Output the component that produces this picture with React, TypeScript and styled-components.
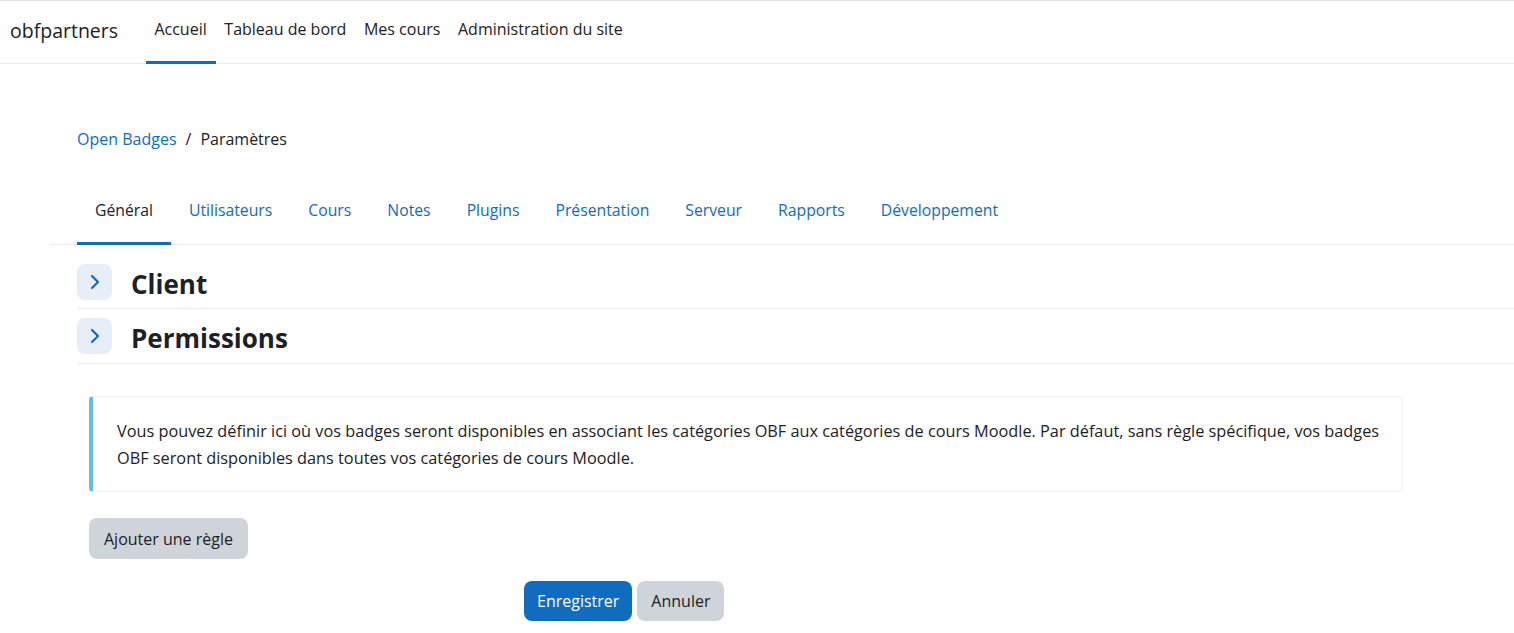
import { FC } from "react";
import styled, { createGlobalStyle } from "styled-components";

const GlobalStyle = createGlobalStyle`
  body {
    margin: 0;
    background: #fff;
    font-family: "Open Sans", "Noto Sans", sans-serif;
    color: #1d2125;
  }
  * { box-sizing: border-box; }
`;

const NavBar = styled.nav`
  display: flex;
  align-items: stretch;
  height: 64px;
  border-top: 1px solid #dee2e6;
  border-bottom: 1px solid #e9ecef;
  padding-left: 10px;
`;

const Brand = styled.div`
  display: flex;
  align-items: center;
  font-size: 19.5px;
  margin-right: 27.5px;
  padding-bottom: 4px;
`;

const NavItem = styled.a<{ active?: boolean }>`
  display: flex;
  align-items: center;
  padding: 0 8.8px 4px;
  font-size: 16px;
  color: #1d2125;
  border-bottom: 3px solid ${(p) => (p.active ? "#0f6cbf" : "transparent")};
  margin-bottom: -1px;
  text-decoration: none;
`;

const Page = styled.main`
  padding: 63px 0 0 77px;
`;

const Breadcrumb = styled.div`
  display: flex;
  align-items: center;
  gap: 9px;
  font-size: 16px;
  line-height: 24px;
  color: #1d2125;
`;

const Crumb = styled.a`
  color: #0f6cbf;
  text-decoration: none;
`;

const Tabs = styled.div`
  display: flex;
  margin: 25px 0 0 -27px;
  padding-left: 27px;
  border-bottom: 1px solid #e9ecef;
`;

const Tab = styled.a<{ active?: boolean }>`
  padding: 22px 18px 20px;
  line-height: 24px;
  font-size: 15.75px;
  color: ${(p) => (p.active ? "#1d2125" : "#0f6cbf")};
  border-bottom: 3px solid ${(p) => (p.active ? "#0f6cbf" : "transparent")};
  margin-bottom: -1px;
  text-decoration: none;
`;

const Section = styled.div<{ first?: boolean }>`
  display: flex;
  align-items: center;
  gap: 19px;
  padding: ${(p) => (p.first ? "19px 0 8px" : "9px 0 9px")};
  border-bottom: 1px solid #e9ecef;
`;

const Toggle = styled.span`
  display: flex;
  align-items: center;
  justify-content: center;
  width: 35px;
  height: 36px;
  border-radius: 8px;
  background: #e7eef8;
  color: #0f6cbf;
`;

const SectionTitle = styled.h3`
  margin: 4px 0 0;
  font-size: 26px;
  font-weight: 700;
  line-height: 32px;
`;

const Body = styled.div`
  padding: 32px 111px 0 12px;
`;

const InfoBox = styled.div`
  border: 1px solid #f0f0f0;
  border-left: 4px solid #5bc0de;
  border-radius: 4px;
  padding: 21px 14px 19px 24px;
  font-size: 16.3px;
  line-height: 27px;
`;

const Button = styled.button<{ primary?: boolean }>`
  font-family: inherit;
  font-size: 16px;
  border: none;
  border-radius: 8px;
  padding: 0 ${(p) => (p.primary ? "13px" : "14px")};
  background: ${(p) => (p.primary ? "#0f6cbf" : "#ced4da")};
  color: ${(p) => (p.primary ? "#fff" : "#1d2125")};
  height: 40px;
`;

const AddButton = styled(Button)`
  margin-top: 26px;
  height: 41px;
  padding: 0 15px;
`;

const Actions = styled.div`
  display: flex;
  gap: 5px;
  margin: 22px 0 0 435px;
`;

const Chevron: FC = () => (
  <svg width="12" height="16" viewBox="0 0 12 16" fill="none">
    <path d="M3 2l6 6-6 6" stroke="currentColor" strokeWidth="2.2" strokeLinecap="round" strokeLinejoin="round" />
  </svg>
);

const tabs = [
  "Général",
  "Utilisateurs",
  "Cours",
  "Notes",
  "Plugins",
  "Présentation",
  "Serveur",
  "Rapports",
  "Développement",
];

const App: FC = () => (
  <>
    <GlobalStyle />
    <NavBar>
      <Brand>obfpartners</Brand>
      <NavItem active>Accueil</NavItem>
      <NavItem>Tableau de bord</NavItem>
      <NavItem>Mes cours</NavItem>
      <NavItem>Administration du site</NavItem>
    </NavBar>
    <Page>
      <Breadcrumb>
        <Crumb>Open Badges</Crumb>
        <span>/</span>
        <span>Paramètres</span>
      </Breadcrumb>
      <Tabs>
        {tabs.map((t, i) => (
          <Tab key={t} active={i === 0}>
            {t}
          </Tab>
        ))}
      </Tabs>
      <Section first>
        <Toggle>
          <Chevron />
        </Toggle>
        <SectionTitle>Client</SectionTitle>
      </Section>
      <Section>
        <Toggle>
          <Chevron />
        </Toggle>
        <SectionTitle>Permissions</SectionTitle>
      </Section>
      <Body>
        <InfoBox>
          Vous pouvez définir ici où vos badges seront disponibles en associant les catégories OBF aux
          catégories de cours Moodle. Par défaut, sans règle spécifique, vos badges OBF seront disponibles
          dans toutes vos catégories de cours Moodle.
        </InfoBox>
        <AddButton>Ajouter une règle</AddButton>
        <Actions>
          <Button primary>Enregistrer</Button>
          <Button>Annuler</Button>
        </Actions>
      </Body>
    </Page>
  </>
);

export default App;
